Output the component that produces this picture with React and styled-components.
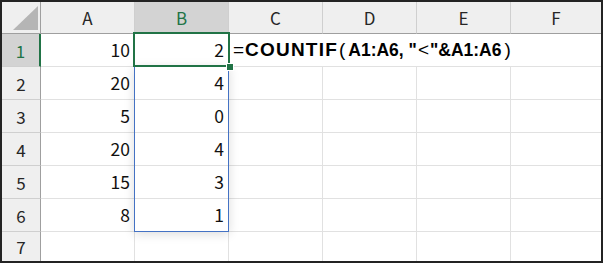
import React from 'react';
import styled, { createGlobalStyle, css } from 'styled-components';

const GlobalStyle = createGlobalStyle`
  html, body {
    margin: 0;
    padding: 0;
    background: #ffffff;
  }
`;

const green = '#217346';

const columns = ['A', 'B', 'C', 'D', 'E', 'F'];
const valuesA = [10, 20, 5, 20, 15, 8];
const valuesB = [2, 4, 0, 4, 3, 1];

export default function App() {
  const rows = [1, 2, 3, 4, 5, 6, 7];

  return (
    <>
      <GlobalStyle />
      <Frame>
        <Sheet>
          <Corner>
            <svg width="25" height="24" viewBox="0 0 25 24">
              <polygon points="25,0 25,24 0,24" fill="#b5b5b5" />
            </svg>
          </Corner>
          {columns.map((c, i) => (
            <ColHeader key={c} $selected={c === 'B'} $last={i === columns.length - 1}>
              {c}
            </ColHeader>
          ))}

          {rows.map((r) => (
            <React.Fragment key={r}>
              <RowHeader $selected={r === 1} $last={r === 7}>{r}</RowHeader>
              {columns.map((c, i) => {
                let value = '';
                if (r <= 6 && c === 'A') value = valuesA[r - 1];
                if (r <= 6 && c === 'B') value = valuesB[r - 1];
                const overflowRow = r === 1 && i >= 2;
                const isFormula = r === 1 && c === 'C';
                return (
                  <Cell
                    key={c}
                    $left={isFormula}
                    $noRight={overflowRow || i === columns.length - 1}
                    $last={r === 7}
                  >
                    {isFormula ? (
                      <Formula>
                        <Thin>=</Thin>
                        <Func>COUNTIF</Func>
                        <Paren>(</Paren>
                        A1:A6, "<Thin>&lt;</Thin>"&amp;A1:A6
                        <Paren $close>)</Paren>
                      </Formula>
                    ) : (
                      value
                    )}
                  </Cell>
                );
              })}
            </React.Fragment>
          ))}

          <RangeBox />
          <Selection>
            <FillHandle />
          </Selection>
        </Sheet>
      </Frame>
    </>
  );
}

const Frame = styled.div`
  width: 603px;
  height: 263px;
  box-sizing: border-box;
  border: 2px solid #232323;
  background: #ffffff;
  overflow: hidden;
`;

const Sheet = styled.div`
  position: relative;
  display: grid;
  grid-template-columns: 39px repeat(5, 94px) 90px;
  grid-template-rows: 32px repeat(6, 33px) 29px;
  font-family: "Noto Sans CJK JP", "Liberation Sans", sans-serif;
  font-size: 17.5px;
  color: #111;
`;

const baseCell = css`
  box-sizing: border-box;
  display: flex;
  align-items: center;
  line-height: 1;
`;

const Corner = styled.div`
  ${baseCell};
  justify-content: flex-end;
  align-items: flex-end;
  padding: 0 2px 3px 0;
  background: #efefef;
  border-right: 1px solid #9f9f9f;
  border-bottom: 1px solid #9f9f9f;
`;

const ColHeader = styled.div`
  ${baseCell};
  justify-content: center;
  font-size: 17px;
  background: ${(p) => (p.$selected ? '#d3d3d3' : '#efefef')};
  color: ${(p) => (p.$selected ? green : '#262626')};
  border-right: ${(p) => (p.$last ? 'none' : '1px solid #cfcfcf')};
  border-bottom: 1px solid #9f9f9f;
`;

const RowHeader = styled.div`
  ${baseCell};
  justify-content: center;
  font-size: 17px;
  background: ${(p) => (p.$selected ? '#d3d3d3' : '#efefef')};
  color: ${(p) => (p.$selected ? green : '#262626')};
  border-right: ${(p) => (p.$selected ? `2px solid ${green}` : '1px solid #9f9f9f')};
  border-bottom: ${(p) => (p.$last ? 'none' : '1px solid #cfcfcf')};
`;

const Cell = styled.div`
  ${baseCell};
  justify-content: ${(p) => (p.$left ? 'flex-start' : 'flex-end')};
  padding: ${(p) => (p.$left ? '0 0 0 3px' : '0 4px 0 0')};
  white-space: nowrap;
  overflow: visible;
  min-width: 0;
  border-right: ${(p) => (p.$noRight ? 'none' : '1px solid #e1e1e1')};
  border-bottom: ${(p) => (p.$last ? 'none' : '1px solid #e1e1e1')};
`;

const Formula = styled.div`
  flex: none;
  font-family: "Liberation Sans", Arial, sans-serif;
  font-weight: 700;
  font-size: 17.5px;
  color: #000;
  position: relative;
  z-index: 1;
`;

const Thin = styled.span`
  font-weight: 400;
  font-size: 19px;
  margin: 0 1px;
`;

const Func = styled.span`
  font-size: 19px;
  letter-spacing: 1.2px;
`;

const Paren = styled.span`
  font-weight: 400;
  font-size: 19px;
  margin: ${(p) => (p.$close ? '0 0 0 3px' : '0 3px 0 1px')};
`;

const RangeBox = styled.div`
  position: absolute;
  left: 132px;
  top: 64px;
  width: 95px;
  height: 166px;
  box-sizing: border-box;
  border: 1px solid #4472c4;
  box-shadow: 0 2px 10px rgba(0, 0, 0, 0.14);
  pointer-events: none;
`;

const Selection = styled.div`
  position: absolute;
  left: 131px;
  top: 30px;
  width: 97px;
  height: 35px;
  box-sizing: border-box;
  border: 2px solid ${green};
  z-index: 2;
`;

const FillHandle = styled.div`
  position: absolute;
  right: -5px;
  bottom: -5px;
  width: 6px;
  height: 6px;
  background: ${green};
  box-shadow: 0 0 0 1px #ffffff;
`;
